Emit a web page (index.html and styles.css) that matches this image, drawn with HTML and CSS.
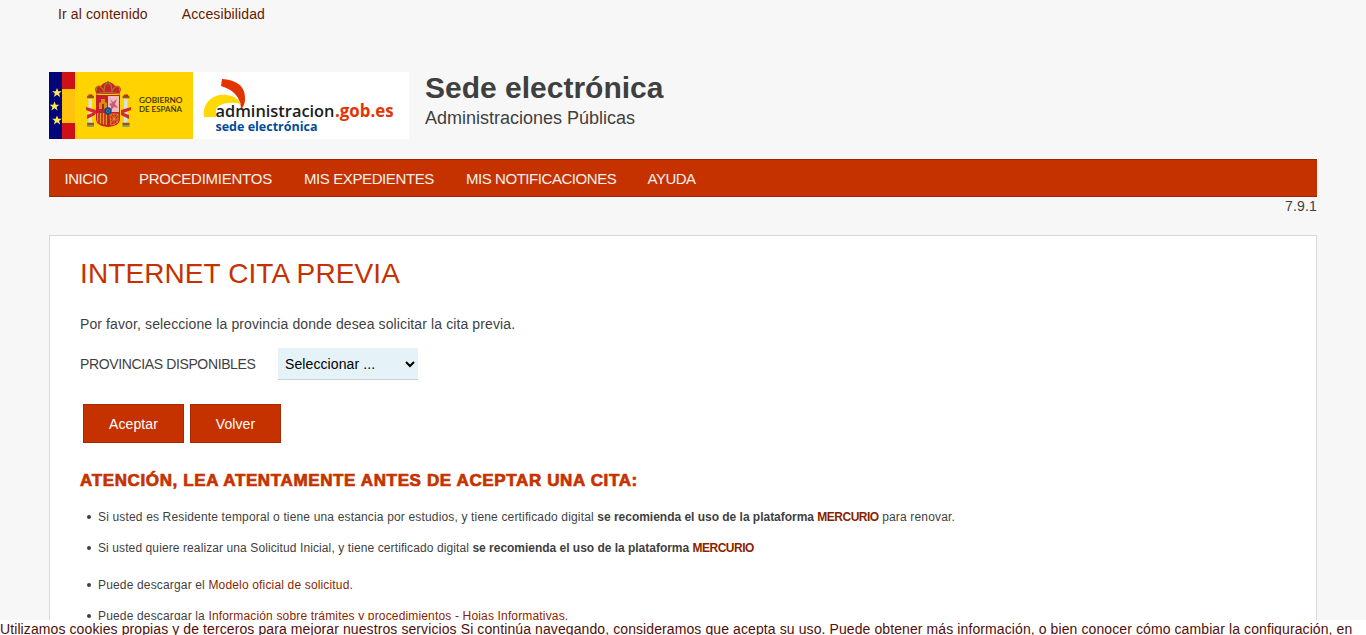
FILE: index.html
```html
<!DOCTYPE html>
<html lang="es">
<head>
<meta charset="utf-8">
<title>Sede electrónica</title>
<link rel="stylesheet" href="styles.css">
</head>
<body>
<div class="page">
  <nav class="skip"><a href="#content">Ir al contenido</a><a href="#">Accesibilidad</a></nav>
  <header class="header">
    <svg class="logo" viewBox="0 0 360 67" width="360" height="67" role="img" aria-label="Gobierno de España - administracion.gob.es">
      <rect width="360" height="67" fill="#fff"/>
      <rect width="144" height="67" fill="#ffd300"/>
      <rect width="13" height="67" fill="#00057a"/>
      <rect x="13" width="13" height="67" fill="#cf1017"/>
      <rect x="13" y="17" width="13" height="34" fill="#ffc20e"/>
      <g fill="#ffe95a">
        <path id="star" d="M8 16l1.300 3.200h3.500l-2.700 2.200 1 3.500-3.100-2.100-3.100 2.100 1-3.500-2.700-2.200h3.500z"/>
        <use href="#star" x="-2.500" y="13.500"/>
        <use href="#star" y="27.500"/>
      </g>
      <g>
        <path d="M48 22c-4-5-1-9 4-8 2-3 4-3 5-4h4c1 1 3 1 5 4 5-1 8 3 4 8z" fill="#c8202c"/>
        <path d="M48 19c-2-4 1-6 4-4l3 4 1-6 3-3 3 3 1 6 3-4c4-2 6 1 4 4M47 22q12-3 24 0" fill="none" stroke="#a87817" stroke-width="1.300"/>
        <path d="M59 9v4M57 10.500h4" stroke="#98631d" stroke-width="1.200"/>
        <path d="M47 23h24v25q-1 6-12 7-11-1-12-7z" fill="#c91e27"/>
        <path d="M59 24h11v16H59z" fill="#efb9bd"/>
        <path d="M61 27l3 3 4-3-2 5 3 4-4-1-3 3v-4l-2-2 3-1z" fill="#c75b78"/>
        <path d="M50 37v-6l2-1v-3h4v3l2 1v6z" fill="#d88c10"/>
        <path d="M53 32h2v5h-2z" fill="#9b2920"/>
        <path d="M48 41h10v12q-10-1-10-5z" fill="#e2a01a"/>
        <path d="M50 41v10m3-10v12m3-12v12" stroke="#be211f" stroke-width="1.500"/>
        <path d="M61 42h8v7q-2 4-7 4zM61 42l8 9m0-9l-8 10M65 42v10M61 47h8" fill="none" stroke="#df9c29" stroke-width=".8"/>
        <circle cx="59" cy="39" r="3.700" fill="#164b86"/>
        <circle cx="59" cy="39" r="1.500" fill="none" stroke="#568fa0" stroke-width=".7"/>
        <path d="M39.500 27h3.500v24h-3.500zM75 27h3.500v24H75z" fill="#dce0dc"/>
        <path d="M38 25h7M73.500 25h7M38 52h7M73.500 52h7" stroke="#8b5c1e" stroke-width="2.500"/>
        <path d="M39.500 23.500h4M75 23.500h4" stroke="#bd2a24" stroke-width="2"/>
        <path d="M37 35l10 3v4l-10-4zM82 35l-10 3v4l10-4zM38 43l8-3v3l-8 4zM80 43l-8-3v3l8 4z" fill="#d22a2b"/>
        <path d="M38 54h7M73.500 54h7" stroke="#75868a" stroke-width="1.500"/>
      </g>
      <g class="gov"><text x="90" y="31.300" textLength="43.500" lengthAdjust="spacingAndGlyphs">GOBIERNO</text><text x="90" y="40.300" textLength="43" lengthAdjust="spacingAndGlyphs">DE ESPAÑA</text></g>
      <path d="M173 7c13 1 24 6 23 21q0 4-4 10 0-18-20-24z" fill="#e33400"/>
      <path d="M155 45c-2-16 11-24 23-22 8 1 12 5 14 9-10-3-25 0-25 6v7z" fill="#ffd900"/>
      <text class="domain" x="166.500" y="45" textLength="119" lengthAdjust="spacingAndGlyphs">administracion</text>
      <text class="domain red" x="286" y="45" textLength="58.500" lengthAdjust="spacingAndGlyphs">.gob.es</text>
      <text class="sede" x="166.500" y="58.500" textLength="102" lengthAdjust="spacingAndGlyphs">sede electrónica</text>
    </svg>
    <div><h1 class="title">Sede electrónica</h1><p class="subtitle">Administraciones Públicas</p></div>
  </header>
  <nav class="menu"><a class="m-home">INICIO</a><a class="m-proc">PROCEDIMIENTOS</a><a class="m-files">MIS EXPEDIENTES</a><a class="m-notes">MIS NOTIFICACIONES</a><a class="m-help">AYUDA</a></nav>
  <div class="version">7.9.1</div>
  <main class="content" id="content">
    <h2 class="heading">INTERNET CITA PREVIA</h2>
    <p class="intro">Por favor, seleccione la provincia donde desea solicitar la cita previa.</p>
    <div class="field"><label class="label" for="prov">PROVINCIAS DISPONIBLES</label><select class="select" id="prov"><option>Seleccionar ...</option></select></div>
    <div class="buttons"><button class="btn accept">Aceptar</button><button class="btn back">Volver</button></div>
    <h3 class="warning">ATENCIÓN, LEA ATENTAMENTE ANTES DE ACEPTAR UNA CITA:</h3>
    <ul class="list">
      <li class="item">Si usted es Residente temporal o tiene una estancia por estudios, y tiene certificado digital <b>se recomienda el uso de la plataforma <a href="#">MERCURIO</a></b> para renovar.</li>
      <li class="item gap">Si usted quiere realizar una Solicitud Inicial, y tiene certificado digital <b>se recomienda el uso de la plataforma <a href="#">MERCURIO</a></b></li>
      <li class="item">Puede descargar el <a href="#">Modelo oficial de solicitud</a>.</li>
      <li class="item">Puede descargar la <a href="#">Información sobre trámites y procedimientos - Hojas Informativas.</a></li>
    </ul>
  </main>
</div>
<div class="cookies">Utilizamos cookies propias y de terceros para mejorar nuestros servicios Si continúa navegando, consideramos que acepta su uso. Puede obtener más información, o bien conocer cómo cambiar la configuración, en</div>
</body>
</html>
```
FILE: styles.css
```css
* { box-sizing: border-box; }
html { overflow: hidden; }
body { margin: 0; height: 635px; overflow: hidden; background: #f7f7f7; color: #3f3f3f; font: 14px/20px "Liberation Sans", Arial, sans-serif; }
a { color: #8a1f00; text-decoration: none; }
h1, h2, h3, p, ul { margin: 0; padding: 0; }
.page { margin: 0 49px; }
.skip { display: flex; gap: 34px; height: 72px; padding: 4px 0 0 9px; letter-spacing: .12px; }
.skip a { color: #661900; }
.header { display: flex; gap: 16px; height: 87px; }
.logo { display: block; flex: none; }
.gov { font: 600 7.500px Lato, sans-serif; fill: #3a3000; }
.domain { font: 600 17px "Open Sans", sans-serif; fill: #202020; }
.red { font-weight: 700; fill: #e33400; }
.sede { font: 700 12.500px "Open Sans", sans-serif; fill: #004a99; }
.title { font-size: 30px; line-height: 32px; }
.subtitle { font-size: 18px; line-height: 28px; }
.menu { display: flex; gap: 32px; height: 38px; padding: 0 15.500px; border: solid #942600; border-width: 1px 0; background: #c53200; font-size: 15px; line-height: 38px; white-space: nowrap; }
.menu a { color: #f7f0ec; }
.m-home { width: 42.500px; letter-spacing: -.5px; }
.m-proc { width: 133px; letter-spacing: -.25px; }
.m-files { width: 130px; letter-spacing: -.4px; }
.m-notes { width: 149.500px; letter-spacing: -.45px; }
.m-help { letter-spacing: -.5px; }
.version { height: 38px; text-align: right; line-height: 19px; letter-spacing: .15px; }
.content { height: 400px; overflow: hidden; padding: 20px 30px; border: 1px solid #d9d9d9; background: #fff; }
.heading { color: #c53200; font-weight: 400; font-size: 28px; line-height: 36px; letter-spacing: .1px; }
.intro { margin-top: 22px; letter-spacing: .11px; }
.field { display: flex; align-items: center; height: 32px; margin-top: 14px; }
.label { width: 198px; font-size: 14px; letter-spacing: -.37px; }
.select { width: 140px; height: 32px; padding: 0 3px; border: 0; border-bottom: 1px solid #c9d3d6; border-radius: 0; background: #e5f3f8; color: #000; font: 14px "Liberation Sans", sans-serif; letter-spacing: .1px; }
.buttons { display: flex; gap: 6px; margin: 24px 3px 0; }
.btn { height: 39px; padding: 1px 0 0; border: 1px solid #a52b00; background: #c53200; color: #fff; font: 14px "Liberation Sans", sans-serif; letter-spacing: .1px; }
.accept { width: 101px; }
.back { width: 91px; }
.warning { margin-top: 28px; color: #c53200; font-size: 17px; line-height: 20px; letter-spacing: .63px; -webkit-text-stroke: .7px; }
.list { margin-top: 16px; list-style: none; font-size: 12px; letter-spacing: .16px; }
.list b { letter-spacing: -.02px; }
.list b a { letter-spacing: -.5px; }
.item { position: relative; height: 20px; margin-bottom: 11px; padding-left: 18px; white-space: nowrap; }
.item::before { position: absolute; top: 8px; left: 7px; width: 4px; height: 4px; border-radius: 50%; background: #3f3f3f; content: ""; }
.gap { margin-bottom: 17px; letter-spacing: .1px; }
.cookies { position: fixed; top: 620px; left: 0; width: 100%; height: 15px; overflow: hidden; background: #fff; color: #520e0a; line-height: 18px; letter-spacing: .097px; white-space: nowrap; }
```
